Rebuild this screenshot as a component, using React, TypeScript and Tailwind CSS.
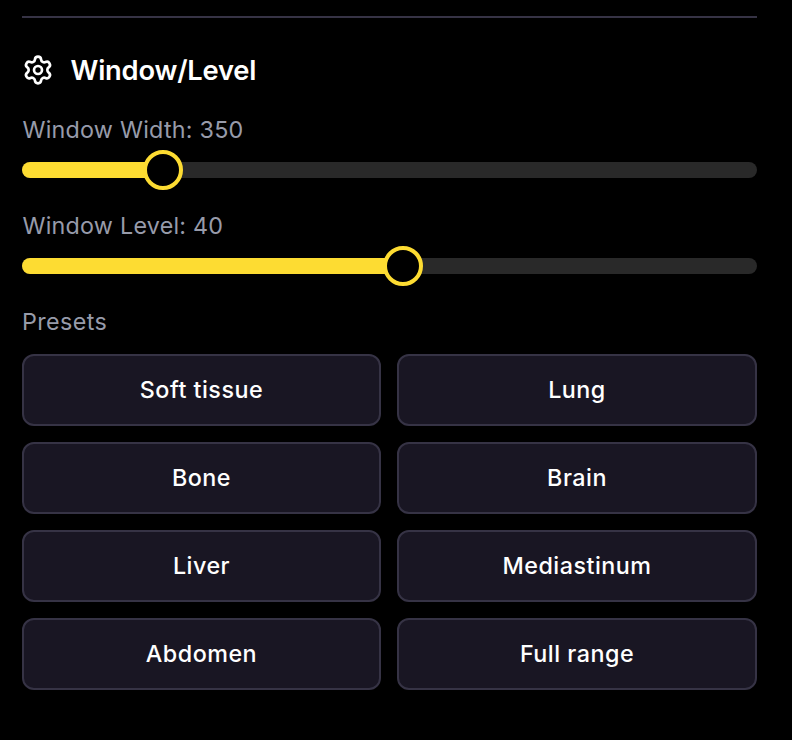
import React from "react";

const presets = ["Soft tissue", "Lung", "Bone", "Brain", "Liver", "Mediastinum", "Abdomen", "Full range"];

function Slider({ label, value }: { label: string; value: number }) {
  return (
    <div>
      <div className="h-8 pl-[0.5px] text-[23.3px] leading-[31px] tracking-[0.24px] text-[#979baa]">{label}</div>
      <div className="relative mt-4 h-4 rounded-full bg-[#292929]">
        <div className="h-4 rounded-l-full bg-[#fddc32]" style={{ width: `${value}px` }} />
        <div
          className="absolute top-1/2 size-10 -translate-x-1/2 -translate-y-1/2 rounded-full border-4 border-[#fddc32] bg-black"
          style={{ left: `${value}px` }}
        />
      </div>
    </div>
  );
}

export default function App() {
  return (
    <div className="h-[740px] w-[792px] bg-black pt-4 pr-[35px] pl-[22px] font-['Inter',sans-serif]">
      <div className="h-0.5 bg-[#363345]" />
      <div className="mt-8 flex h-10 items-center gap-[16.5px] text-white">
        <svg className="size-8" viewBox="0 0 24 24" fill="none" stroke="currentColor" strokeWidth="2" strokeLinecap="round" strokeLinejoin="round">
          <path d="M9.671 4.136a2.34 2.34 0 0 1 4.659 0 2.34 2.34 0 0 0 3.319 1.915 2.34 2.34 0 0 1 2.33 4.033 2.34 2.34 0 0 0 0 3.831 2.34 2.34 0 0 1-2.33 4.033 2.34 2.34 0 0 0-3.319 1.915 2.34 2.34 0 0 1-4.659 0 2.34 2.34 0 0 0-3.32-1.915 2.34 2.34 0 0 1-2.33-4.033 2.34 2.34 0 0 0 0-3.831A2.34 2.34 0 0 1 6.35 6.051a2.34 2.34 0 0 0 3.319-1.915" />
          <circle cx="12" cy="12" r="3" />
        </svg>
        <h2 className="pt-0.5 text-[27.3px] leading-10 font-semibold tracking-[-0.2px]">Window/Level</h2>
      </div>
      <div className="mt-6 flex flex-col gap-8">
        <Slider label="Window Width: 350" value={141} />
        <Slider label="Window Level: 40" value={381} />
      </div>
      <div className="mt-8 h-8 text-[23.3px] leading-[31px] tracking-[0.4px] text-[#979baa]">Presets</div>
      <div className="mt-4 grid grid-cols-[359px_360px] gap-4">
        {presets.map((name) => (
          <button key={name} className="h-[72px] rounded-xl border-2 border-[#363345] bg-[#191623] pt-px text-[23.3px] font-medium tracking-[0.5px] text-white">
            {name}
          </button>
        ))}
      </div>
    </div>
  );
}
